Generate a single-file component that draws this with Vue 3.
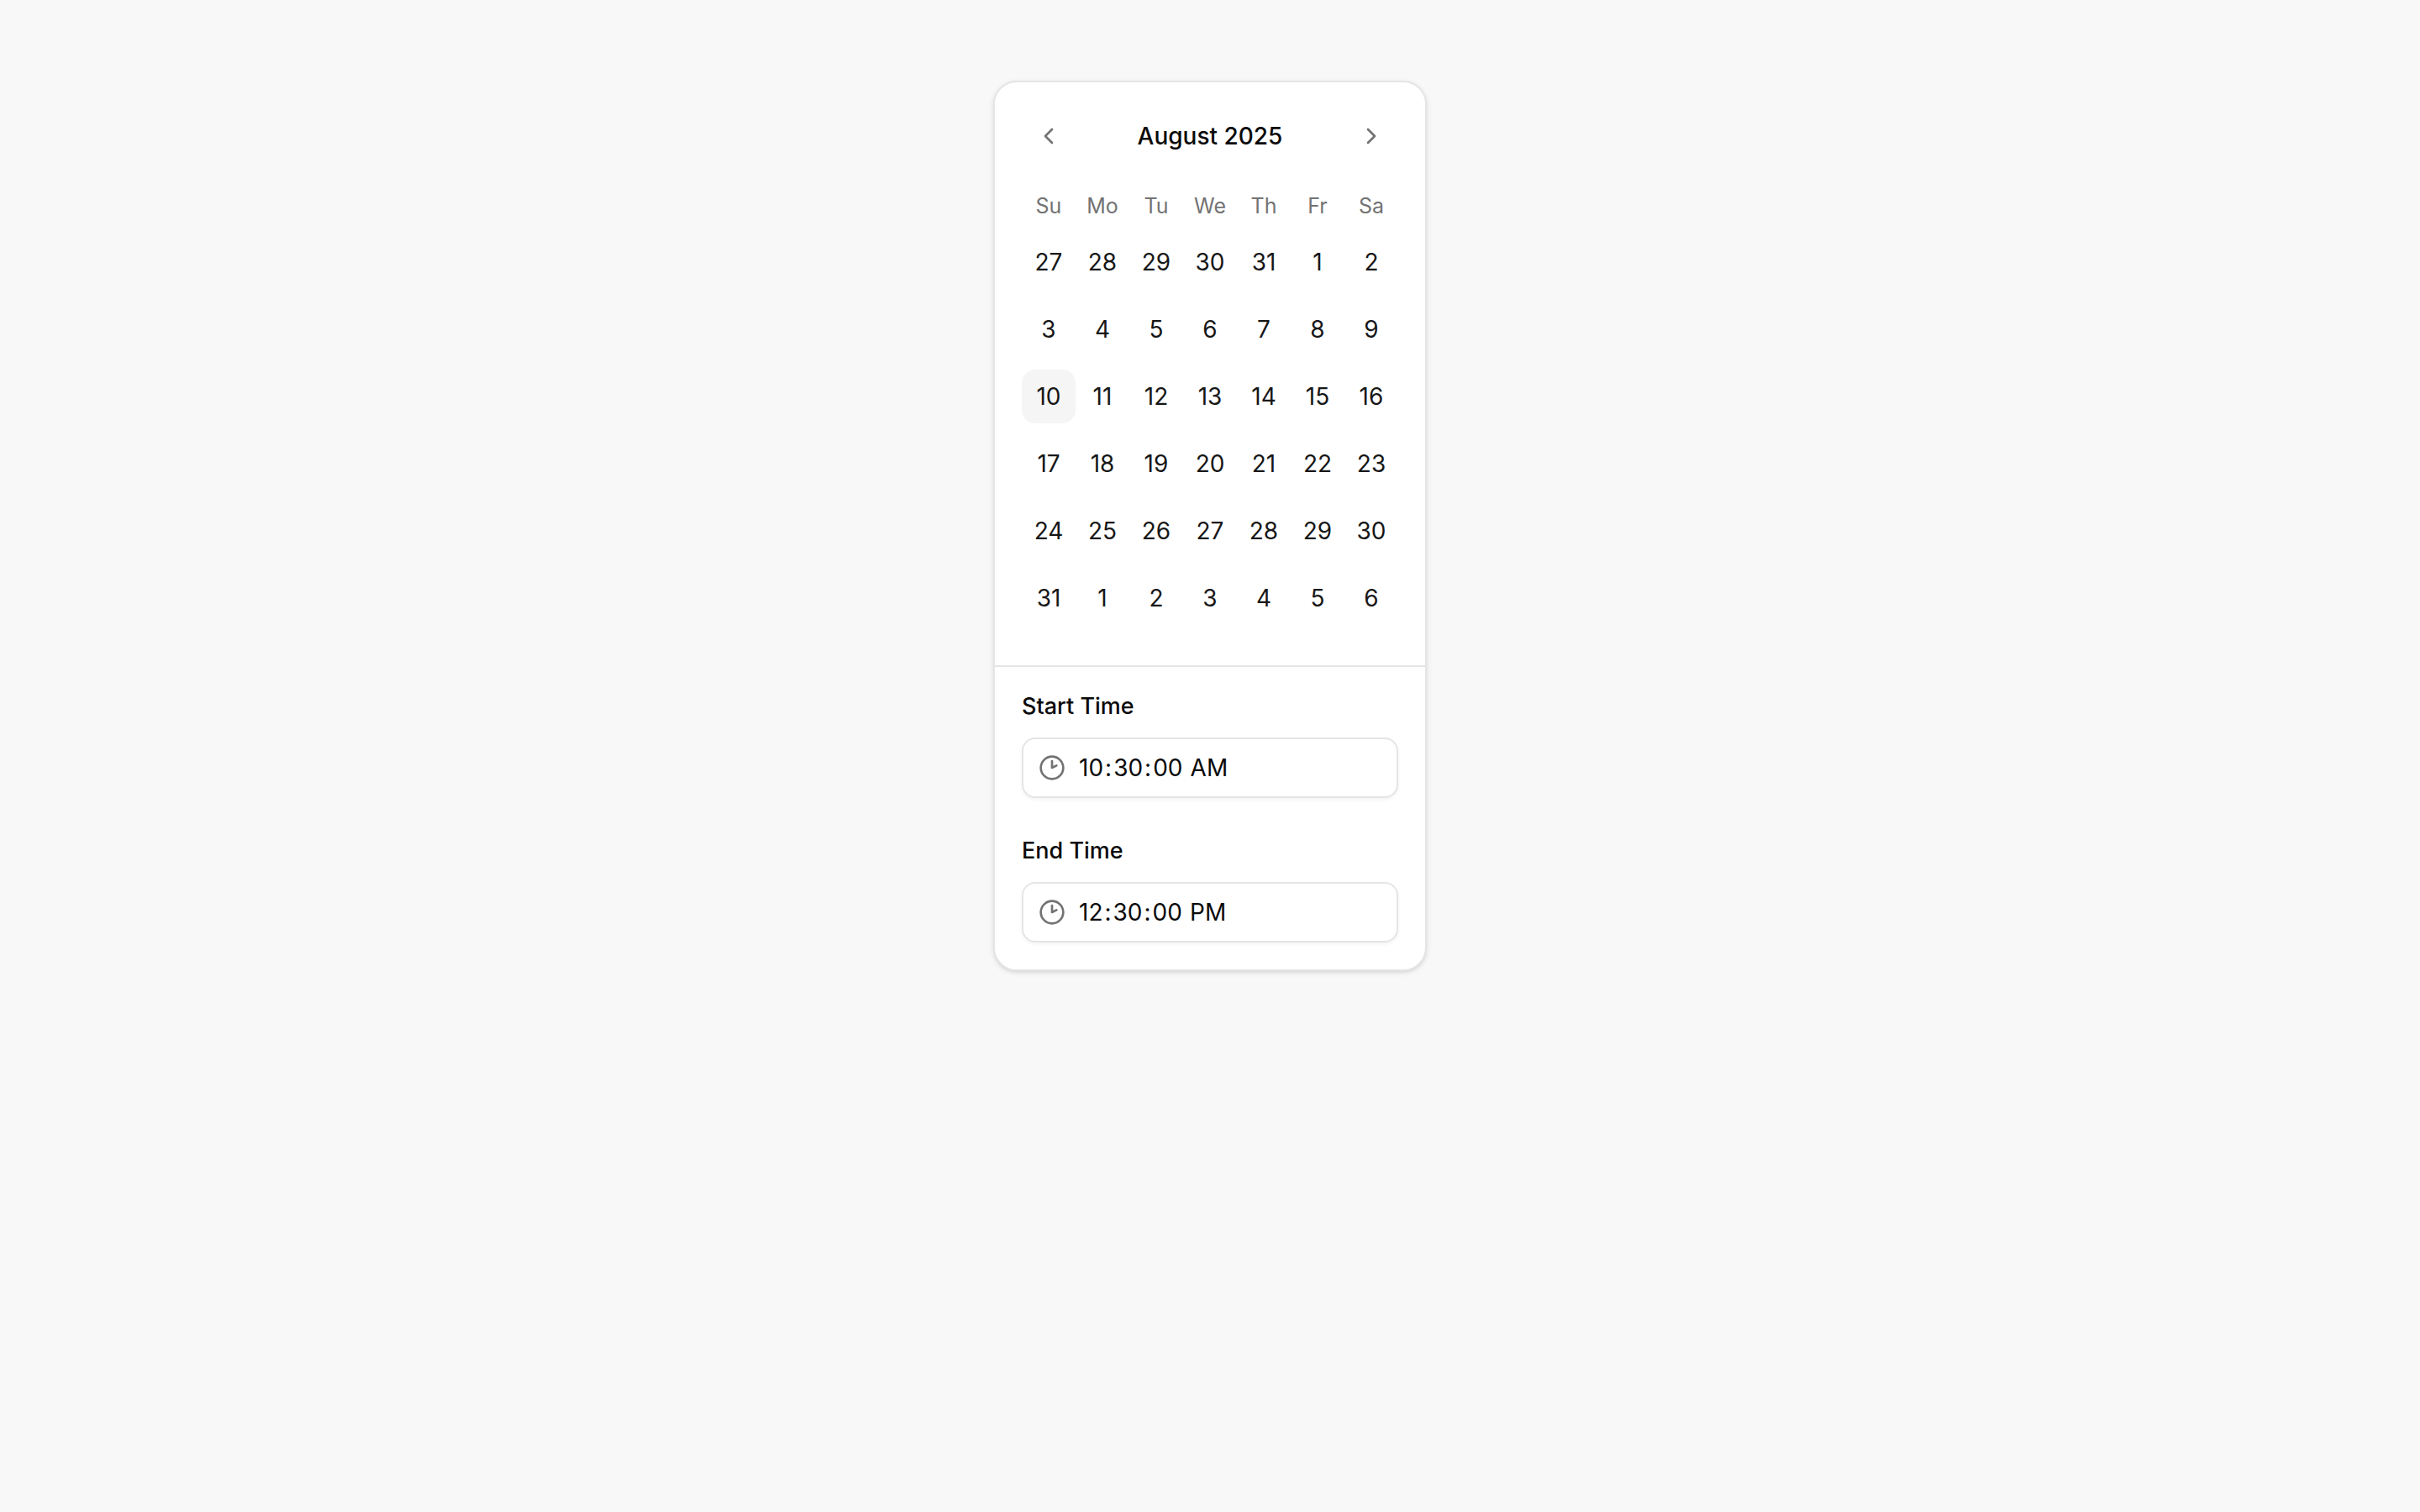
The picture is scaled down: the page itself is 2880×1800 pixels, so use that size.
<script setup>
import { ref, computed } from 'vue'

const viewed = ref(new Date(2025, 7, 1))
const selected = ref(new Date(2025, 7, 10))
const weekdays = ['Su', 'Mo', 'Tu', 'We', 'Th', 'Fr', 'Sa']
const fields = ref([
  { id: 'time-from', label: 'Start Time', value: '10:30:00' },
  { id: 'time-to', label: 'End Time', value: '12:30:00' },
])

const title = computed(() =>
  viewed.value.toLocaleDateString('en-US', { month: 'long', year: 'numeric' })
)

const weeks = computed(() => {
  const year = viewed.value.getFullYear()
  const month = viewed.value.getMonth()
  const lead = viewed.value.getDay()
  const total = lead + new Date(year, month + 1, 0).getDate()
  return Array.from({ length: Math.ceil(total / 7) }, (_, w) =>
    Array.from({ length: 7 }, (_, d) => new Date(year, month, w * 7 + d + 1 - lead))
  )
})

function shift(step) {
  viewed.value = new Date(viewed.value.getFullYear(), viewed.value.getMonth() + step, 1)
}

function isSelected(day) {
  return day.getTime() === selected.value.getTime()
}
</script>

<template>
  <main class="page">
    <section class="card">
      <div class="calendar">
        <header class="caption">
          <button type="button" class="nav" aria-label="Previous month" @click="shift(-1)">
            <svg class="icon" viewBox="0 0 24 24"><path d="m15 18-6-6 6-6" /></svg>
          </button>
          <h1 id="month" class="title">{{ title }}</h1>
          <button type="button" class="nav" aria-label="Next month" @click="shift(1)">
            <svg class="icon" viewBox="0 0 24 24"><path d="m9 18 6-6-6-6" /></svg>
          </button>
        </header>
        <table class="grid" aria-labelledby="month">
          <thead>
            <tr>
              <th v-for="name in weekdays" :key="name" scope="col">{{ name }}</th>
            </tr>
          </thead>
          <tbody>
            <tr v-for="week in weeks" :key="week[0].getTime()">
              <td v-for="day in week" :key="day.getTime()">
                <button
                  type="button"
                  class="day"
                  :class="{ selected: isSelected(day) }"
                  :aria-pressed="isSelected(day)"
                  @click="selected = day"
                >{{ day.getDate() }}</button>
              </td>
            </tr>
          </tbody>
        </table>
      </div>
      <div class="times">
        <div v-for="field in fields" :key="field.id" class="field">
          <label :for="field.id">{{ field.label }}</label>
          <div class="control">
            <svg class="icon" viewBox="0 0 24 24" aria-hidden="true">
              <circle cx="12" cy="12" r="10" />
              <path d="M12 6v6l4-2" />
            </svg>
            <input :id="field.id" v-model="field.value" type="time" step="1" />
          </div>
        </div>
      </div>
    </section>
  </main>
</template>

<style>
body {
  background: #f8f8f8;
}
</style>

<style scoped>
.page {
  display: flex;
  justify-content: center;
  padding: 96px 32px;
  font-family: Inter, "Liberation Sans", sans-serif;
  font-size: 28px;
  color: #0a0a0a;
}

.card {
  border: 2px solid #e5e5e5;
  border-radius: 28px;
  background: #fff;
  box-shadow: 0 2px 6px rgba(0, 0, 0, 0.1), 0 2px 4px -2px rgba(0, 0, 0, 0.1);
}

.calendar {
  padding: 32px 32px 48px;
}

.caption {
  display: flex;
  align-items: center;
  justify-content: space-between;
}

.nav,
.day {
  display: flex;
  align-items: center;
  justify-content: center;
  width: 64px;
  height: 64px;
  padding: 0;
  border: 0;
  border-radius: 16px;
  background: transparent;
  font: inherit;
  color: #171717;
}

.day.selected {
  background: #f5f5f5;
}

.title {
  margin: 0;
  font-size: 28px;
  font-weight: 500;
}

.icon {
  flex: none;
  width: 32px;
  height: 32px;
  fill: none;
  stroke: #737373;
  stroke-width: 2;
  stroke-linecap: round;
  stroke-linejoin: round;
}

.grid {
  margin-top: 32px;
  border-collapse: collapse;
}

.grid th {
  padding: 0;
  font-size: 25px;
  font-weight: 400;
  line-height: 38px;
  color: #737373;
}

.grid td {
  padding: 16px 0 0;
}

.times {
  display: flex;
  flex-direction: column;
  gap: 48px;
  padding: 32px;
  border-top: 2px solid #e5e5e5;
}

.field {
  display: flex;
  flex-direction: column;
  gap: 22px;
}

.field label {
  font-size: 27px;
  font-weight: 500;
  line-height: 30px;
}

.control {
  display: flex;
  align-items: center;
  gap: 14px;
  box-sizing: border-box;
  height: 72px;
  padding: 0 18px;
  border: 2px solid #e5e5e5;
  border-radius: 16px;
  box-shadow: 0 2px 4px rgba(0, 0, 0, 0.05);
}

.control input {
  flex: 1;
  min-width: 0;
  padding: 0;
  border: 0;
  outline: 0;
  background: transparent;
  font: inherit;
  color: inherit;
}

.control input::-webkit-calendar-picker-indicator {
  display: none;
}

.control input::-webkit-datetime-edit-hour-field,
.control input::-webkit-datetime-edit-minute-field,
.control input::-webkit-datetime-edit-second-field,
.control input::-webkit-datetime-edit-ampm-field {
  padding: 0 2px;
}
</style>
